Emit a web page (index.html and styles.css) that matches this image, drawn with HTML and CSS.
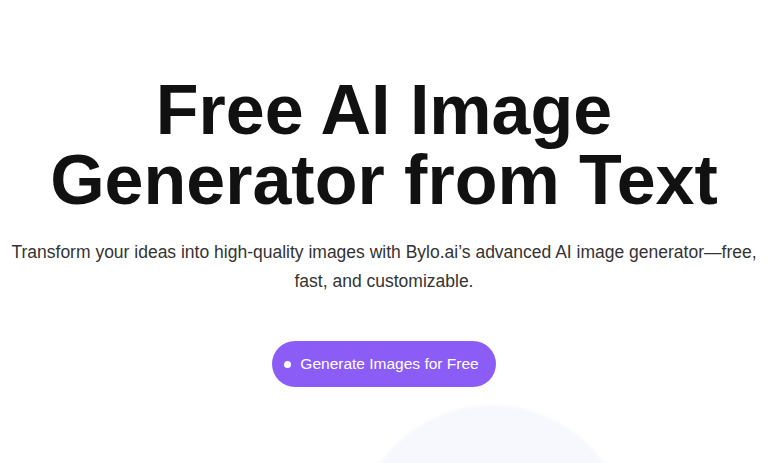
FILE: index.html
```html
<!DOCTYPE html>
<html lang="en">
<head>
<meta charset="utf-8">
<title>Free AI Image Generator from Text</title>
<link rel="stylesheet" href="styles.css">
</head>
<body>
<main class="hero">
  <div class="glow"></div>
  <h1 class="title">Free AI Image Generator from Text</h1>
  <p class="subtitle">Transform your ideas into high-quality images with Bylo.ai’s advanced AI image <span class="nowrap">generator—free,</span> fast, and customizable.</p>
  <a class="cta" href="#"><span class="dot"></span>Generate Images for Free</a>
</main>
</body>
</html>
```

FILE: styles.css
```css
html, body {
  margin: 0;
  padding: 0;
  background: #ffffff;
}
body {
  font-family: "Liberation Sans", Arial, sans-serif;
  overflow: hidden;
  height: 463px;
}
.hero {
  position: relative;
  display: flex;
  flex-direction: column;
  align-items: center;
  text-align: center;
  padding: 75px 8px 0;
  height: 463px;
  box-sizing: border-box;
  overflow: hidden;
}
.glow {
  position: absolute;
  left: 355px;
  top: 405px;
  width: 274px;
  height: 274px;
  border-radius: 50%;
  background: #f7f8fd;
  filter: blur(1.5px);
  z-index: 0;
}
.title {
  position: relative;
  z-index: 1;
  margin: 0;
  font-size: 70px;
  line-height: 70px;
  font-weight: 700;
  color: #111111;
}
.subtitle {
  position: relative;
  z-index: 1;
  margin: 23px 0 0;
  font-size: 17.5px;
  line-height: 29px;
  color: #333333;
}
.nowrap {
  white-space: nowrap;
}
.cta {
  position: relative;
  z-index: 1;
  margin-top: 45px;
  display: inline-flex;
  align-items: center;
  gap: 9px;
  height: 46px;
  padding: 0 17px 0 12px;
  border-radius: 23px;
  background: #8b5cf6;
  color: #ffffff;
  font-size: 15.5px;
  text-decoration: none;
  box-sizing: border-box;
}
.dot {
  width: 7px;
  height: 7px;
  border-radius: 50%;
  background: #ffffff;
}
```
